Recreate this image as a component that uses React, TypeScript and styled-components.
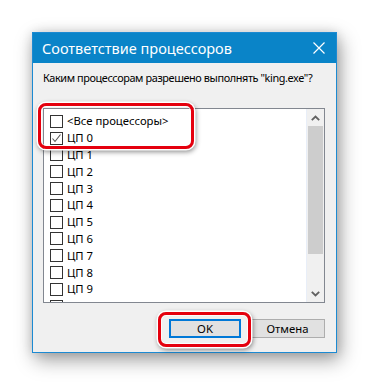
import React from 'react';
import styled, { createGlobalStyle } from 'styled-components';

const GlobalStyle = createGlobalStyle`
  html, body {
    margin: 0;
    padding: 0;
    background: #ffffff;
  }
  body {
    font-family: 'Noto Sans', 'Open Sans', sans-serif;
  }
`;

const Page = styled.div`
  width: 369px;
  height: 385px;
  padding: 32px 0 0 32px;
  box-sizing: border-box;
  overflow: hidden;
`;

const Window = styled.div`
  position: relative;
  width: 305px;
  height: 321px;
  box-sizing: border-box;
  border: 1px solid #1c8ad2;
  background: #f0f0f0;
  box-shadow: 3px 7px 18px rgba(0, 0, 0, 0.38), 0 0 10px rgba(0, 0, 0, 0.12);
  display: flex;
  flex-direction: column;
`;

const TitleBar = styled.div`
  height: 30px;
  background: #0a84c8;
  color: #ffffff;
  display: flex;
  align-items: center;
  justify-content: space-between;
  padding: 0 9px 0 9px;
  font-size: 14.5px;
`;

const Title = styled.span`
  white-space: nowrap;
`;

const CloseIcon = styled.svg`
  width: 12px;
  height: 12px;
  margin-right: 2px;
`;

const Body = styled.div`
  flex: 1;
  display: flex;
  flex-direction: column;
  padding: 0 10px 0 10px;
  font-size: 11.3px;
  color: #000;
`;

const Prompt = styled.div`
  margin-top: 7px;
  height: 16px;
  line-height: 16px;
  white-space: nowrap;
  font-size: 10.9px;
  letter-spacing: -0.4px;
`;

const ListBox = styled.div`
  margin-top: 22px;
  width: 282px;
  height: 195px;
  box-sizing: border-box;
  border: 1px solid #828790;
  background: #ffffff;
  display: flex;
  overflow: hidden;
`;

const Items = styled.div`
  flex: 1;
  padding: 4px 0 0 6px;
  overflow: hidden;
`;

const Item = styled.div`
  height: 16.8px;
  display: flex;
  align-items: center;
  gap: 4px;
  white-space: nowrap;
`;

const Box = styled.span`
  width: 13px;
  height: 13px;
  box-sizing: border-box;
  border: 1px solid #333333;
  background: #ffffff;
  display: flex;
  align-items: center;
  justify-content: center;
`;

const ItemText = styled.span`
  line-height: 14px;
`;

const ScrollBar = styled.div`
  width: 17px;
  display: flex;
  flex-direction: column;
  background: #f0f0f0;
  border-left: 1px solid #e8eef8;
`;

const Arrow = styled.div`
  height: 17px;
  display: flex;
  align-items: center;
  justify-content: center;
`;

const Track = styled.div`
  flex: 1;
  display: flex;
  flex-direction: column;
`;

const Thumb = styled.div`
  margin: 0 1px;
  height: 128px;
  background: #cdcdcd;
`;

const Buttons = styled.div`
  margin-top: 16px;
  display: flex;
  justify-content: flex-end;
  gap: 9px;
  padding-right: 1px;
`;

const Button = styled.button<{ $default?: boolean }>`
  width: ${(p) => (p.$default ? '72px' : '75px')};
  height: 19px;
  box-sizing: border-box;
  padding: 0;
  background: #e1e1e1;
  border: ${(p) => (p.$default ? '2px solid #0078d7' : '1px solid #adadad')};
  font-family: 'Noto Sans', 'Open Sans', sans-serif;
  font-size: 11.3px;
  color: #000;
  line-height: 14px;
`;

const Highlight = styled.div<{ $x: number; $y: number; $w: number; $h: number }>`
  position: absolute;
  left: ${(p) => p.$x}px;
  top: ${(p) => p.$y}px;
  width: ${(p) => p.$w}px;
  height: ${(p) => p.$h}px;
  box-sizing: border-box;
  border: 3px solid #e5000e;
  border-radius: 8px;
  box-shadow: 0 0 0 1.5px #ffffff, 1px 2px 5px 1px rgba(0, 0, 0, 0.45),
    inset 0 0 0 1px rgba(255, 255, 255, 0.8);
  pointer-events: none;
`;

const Check = () => (
  <svg width="11" height="11" viewBox="0 0 11 11">
    <path d="M1.5 5.5 L4 8.5 L9.5 1.5" fill="none" stroke="#555" strokeWidth="1.1" />
  </svg>
);

const cpus = ['<Все процессоры>', ...Array.from({ length: 11 }, (_, i) => `ЦП ${i}`)];

const App: React.FC = () => (
  <Page>
    <GlobalStyle />
    <Window>
      <TitleBar>
        <Title>Соответствие процессоров</Title>
        <CloseIcon viewBox="0 0 12 12">
          <path d="M0.5 0.5 L11.5 11.5 M11.5 0.5 L0.5 11.5" stroke="#fff" strokeWidth="1.2" />
        </CloseIcon>
      </TitleBar>
      <Body>
        <Prompt>Каким процессорам разрешено выполнять "king.exe"?</Prompt>
        <ListBox>
          <Items>
            {cpus.map((c, i) => (
              <Item key={c}>
                <Box>{i === 1 && <Check />}</Box>
                <ItemText>{c}</ItemText>
              </Item>
            ))}
          </Items>
          <ScrollBar>
            <Arrow>
              <svg width="9" height="6" viewBox="0 0 9 6">
                <path d="M0.8 5.2 L4.5 1.5 L8.2 5.2" fill="none" stroke="#606060" strokeWidth="1.8" />
              </svg>
            </Arrow>
            <Track>
              <Thumb />
            </Track>
            <Arrow>
              <svg width="9" height="6" viewBox="0 0 9 6">
                <path d="M0.8 0.8 L4.5 4.5 L8.2 0.8" fill="none" stroke="#606060" strokeWidth="1.8" />
              </svg>
            </Arrow>
          </ScrollBar>
        </ListBox>
        <Buttons>
          <Button $default>OK</Button>
          <Button>Отмена</Button>
        </Buttons>
      </Body>
      <Highlight $x={5} $y={70} $w={156} $h={46} />
      <Highlight $x={125} $y={279} $w={93} $h={35} />
    </Window>
  </Page>
);

export default App;
